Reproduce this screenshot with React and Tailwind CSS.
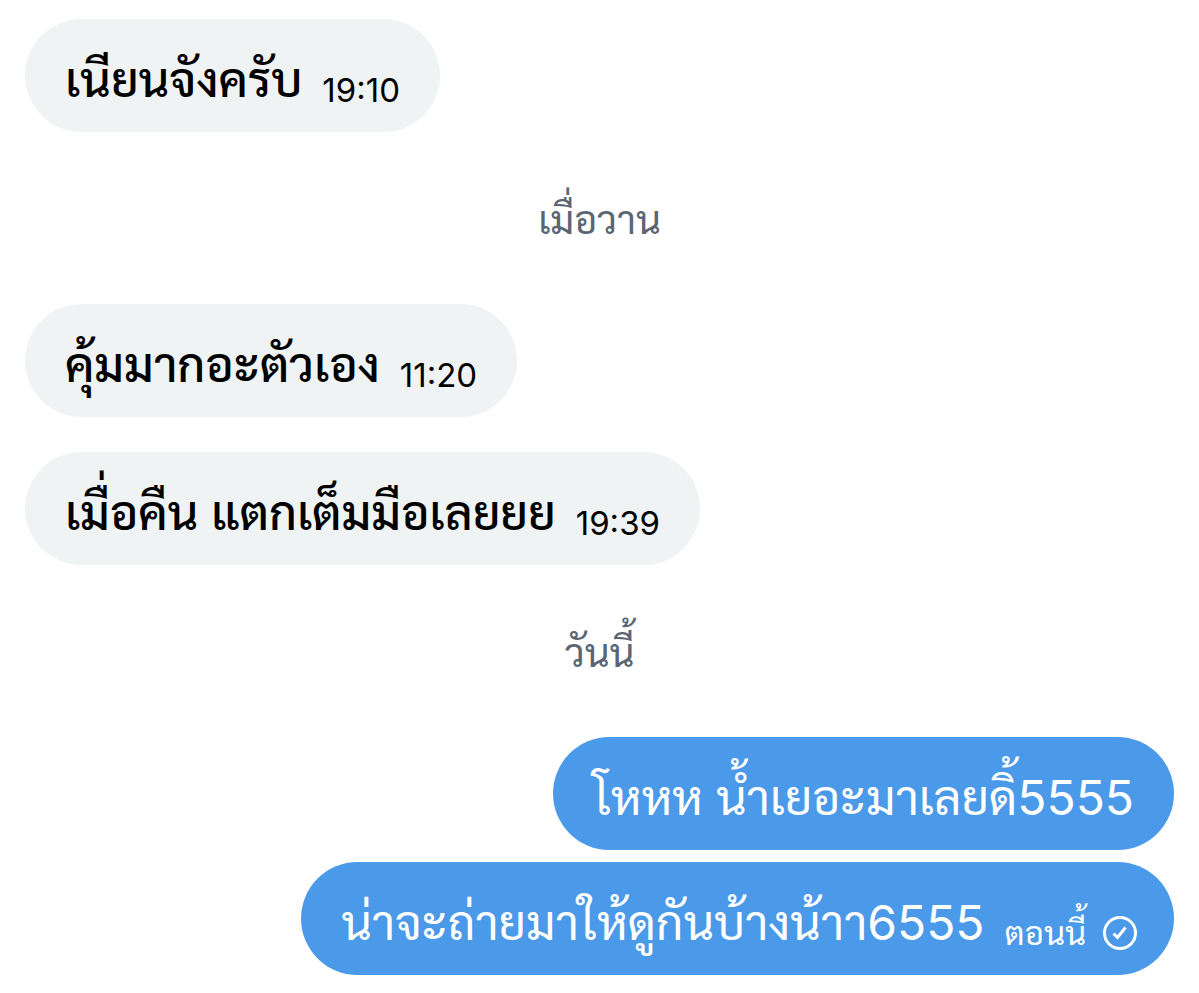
const days = [
  {
    label: null,
    messages: [{ id: 1, text: "เนียนจังครับ", time: "19:10" }],
  },
  {
    label: "เมื่อวาน",
    messages: [
      { id: 2, text: "คุ้มมากอะตัวเอง", time: "11:20" },
      { id: 3, text: "เมื่อคืน แตกเต็มมือเลยยย", time: "19:39" },
    ],
  },
  {
    label: "วันนี้",
    messages: [
      { id: 4, text: "โหหห น้ำเยอะมาเลยดิ้5555", mine: true },
      { id: 5, text: "น่าจะถ่ายมาให้ดูกันบ้างน้าา6555", time: "ตอนนี้", mine: true, sent: true },
    ],
  },
];

const SentIcon = () => (
  <svg
    viewBox="0 0 36 36"
    role="img"
    aria-label="ส่งแล้ว"
    className="size-9 shrink-0"
    fill="none"
    stroke="currentColor"
    strokeWidth="3"
  >
    <circle cx="18" cy="18" r="15.5" />
    <path d="M11.5 18.5l4 4 8-10" />
  </svg>
);

const Bubble = ({ message }) => {
  const { text, time, mine, sent } = message;
  return (
    <li
      className={`flex min-h-[113px] items-center gap-5 rounded-[57px] ${
        mine ? "self-end bg-[#4b99e9] text-white" : "self-start bg-[#eff3f4] font-medium text-black"
      } ${sent ? "pl-10 pr-9" : "px-10"}`}
    >
      <p className="whitespace-nowrap pt-2 text-[48px] leading-[72px]">{text}</p>
      {time && (
        <div className="flex items-center gap-4 pt-7">
          <time className="whitespace-nowrap text-[33px] font-normal leading-10">{time}</time>
          {sent && <SentIcon />}
        </div>
      )}
    </li>
  );
};

export default function App() {
  return (
    <main className="bg-white px-[25px] pb-[18px] pt-[19px] font-['Inter','Sarabun','Loma',sans-serif]">
      {days.map((day) => (
        <section key={day.messages[0].id}>
          {day.label && (
            <h2 className="pb-[54px] pt-[58px] text-center text-[39px] leading-[60px] text-[#5b6673]">
              {day.label}
            </h2>
          )}
          <ul className={day.messages[0].mine ? "flex flex-col gap-3" : "flex flex-col gap-[35px]"}>
            {day.messages.map((message) => (
              <Bubble key={message.id} message={message} />
            ))}
          </ul>
        </section>
      ))}
    </main>
  );
}
